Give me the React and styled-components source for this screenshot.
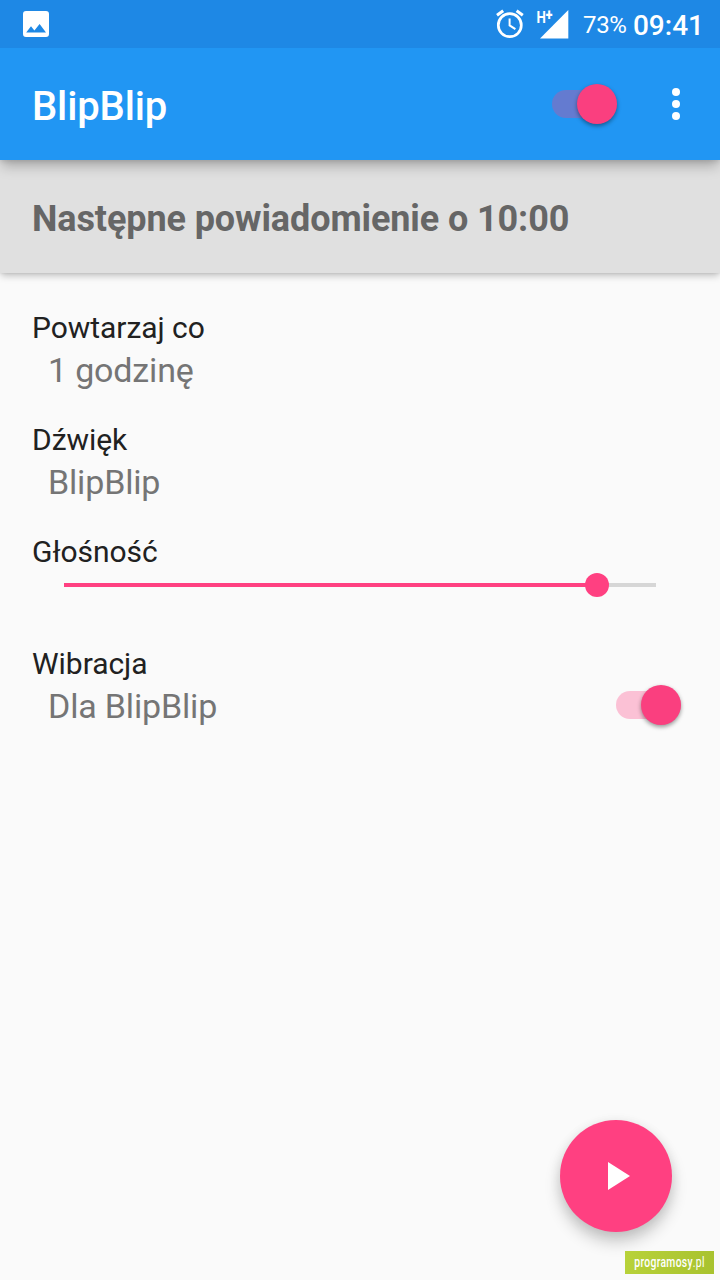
import { useState } from 'react'
import styled, { createGlobalStyle } from 'styled-components'

function ImageIcon() {
   return (
      <svg width="26" height="26" viewBox="0 0 26 26">
         <path
            fill="#fff"
            fillRule="evenodd"
            d="M3 0H23A3 3 0 0 1 26 3V23A3 3 0 0 1 23 26H3A3 3 0 0 1 0 23V3A3 3 0 0 1 3 0ZM3.2 21.6H23L16.6 13L11.4 19.6L8 15.2Z"
         />
      </svg>
   )
}

function AlarmIcon() {
   return (
      <svg width="32" height="32" viewBox="0 0 32 32" fill="none">
         <g stroke="#fff">
            <circle cx="15.8" cy="17.2" r="11.5" strokeWidth="2.7" />
            <path d="M15.6 10.4V17.4L21.4 21.2" strokeWidth="2" />
            <path
               d="M3 7.3L9.2 2.7M28.8 7.3L22.6 2.7"
               strokeWidth="3"
            />
         </g>
      </svg>
   )
}

function SignalIcon() {
   return (
      <svg width="34" height="48" viewBox="0 -8 34 48">
         <path fill="#fff" d="M5 30.4L33.3 2V30.4Z" />
         <NetworkText transform="translate(1.4 14.7) scale(0.78 1)">
            H<tspan dy="-2.4">+</tspan>
         </NetworkText>
      </svg>
   )
}

function Toggle({ checked, onChange, label }) {
   return (
      <Track
         type="button"
         role="switch"
         aria-checked={checked}
         aria-label={label}
         $on={checked}
         onClick={() => onChange(!checked)}
      >
         <Thumb $on={checked} />
      </Track>
   )
}

function App() {
   const [enabled, setEnabled] = useState(true)
   const [vibrate, setVibrate] = useState(true)
   const volume = 90

   return (
      <Screen>
         <GlobalStyle />
         <StatusBar>
            <ImageIcon />
            <StatusRight>
               <AlarmIcon />
               <SignalIcon />
               <Battery>73%</Battery>
               <Clock>09:41</Clock>
            </StatusRight>
         </StatusBar>
         <Toolbar>
            <Title>BlipBlip</Title>
            <Toggle checked={enabled} onChange={setEnabled} label="BlipBlip" />
            <MenuButton type="button">
               <Dot />
               <Dot />
               <Dot />
            </MenuButton>
         </Toolbar>
         <Banner>Następne powiadomienie o 10:00</Banner>
         <Settings>
            <Row>
               <Label>Powtarzaj co</Label>
               <Value>1 godzinę</Value>
            </Row>
            <Row>
               <Label>Dźwięk</Label>
               <Value>BlipBlip</Value>
            </Row>
            <Row>
               <Label>Głośność</Label>
               <Slider>
                  <SliderFill style={{ width: `${volume}%` }} />
                  <SliderThumb />
                  <SliderRest />
               </Slider>
            </Row>
            <Row>
               <Label>Wibracja</Label>
               <ValueLine>
                  <Value>Dla BlipBlip</Value>
                  <Toggle
                     checked={vibrate}
                     onChange={setVibrate}
                     label="Wibracja"
                  />
               </ValueLine>
            </Row>
         </Settings>
         <PlayButton type="button">
            <svg width="24" height="30" viewBox="0 0 24 30">
               <path fill="#fff" d="M1 1V29L23 15Z" />
            </svg>
         </PlayButton>
         <Watermark>
            <WatermarkText>
               programosy<span>.pl</span>
            </WatermarkText>
         </Watermark>
      </Screen>
   )
}

export default App

const GlobalStyle = createGlobalStyle`
   * {
      box-sizing: border-box;
   }
   body {
      margin: 0;
      background: #fafafa;
   }
   button {
      border: none;
      padding: 0;
      cursor: pointer;
   }
`
const Screen = styled.div`
   position: relative;
   width: 720px;
   height: 1280px;
   overflow: hidden;
   display: flex;
   flex-direction: column;
   background: #fafafa;
   font-family: Roboto, sans-serif;
`
const StatusBar = styled.header`
   display: flex;
   align-items: center;
   justify-content: space-between;
   height: 48px;
   padding: 0 16px 0 23px;
   background: #1e88e5;
   color: #fff;
   z-index: 3;
`
const StatusRight = styled.div`
   display: flex;
   align-items: center;
   height: 48px;
   & > svg:nth-child(2) {
      margin-left: 9px;
   }
`
const NetworkText = styled.text`
   fill: #fff;
   font-family: Roboto, sans-serif;
   font-weight: 700;
   font-size: 17px;
   tspan {
      font-size: 16px;
      font-weight: 900;
   }
`
const Battery = styled.span`
   margin-left: 14px;
   font-size: 24px;
   line-height: 28px;
   margin-top: 2px;
   width: 44px;
   letter-spacing: -0.3px;
`
const Clock = styled.span`
   margin-left: 6px;
   font-size: 28px;
   line-height: 32px;
   font-weight: 500;
   margin-top: 3px;
`
const Toolbar = styled.div`
   display: flex;
   align-items: center;
   height: 112px;
   padding: 0 24px 0 32px;
   background: #2196f3;
   z-index: 2;
   box-shadow: 0 8px 12px -2px rgba(0, 0, 0, 0.25),
      0 1px 5px rgba(0, 0, 0, 0.12);
`
const Title = styled.h1`
   flex: 1;
   margin: 6px 0 0;
   font-weight: 500;
   font-size: 40px;
   line-height: 46px;
   letter-spacing: -0.15px;
   color: #fff;
`
const Track = styled.button`
   display: flex;
   align-items: center;
   justify-content: ${(p) => (p.$on ? 'flex-end' : 'flex-start')};
   width: 65px;
   height: 28px;
   border-radius: 14px;
   background: ${(p) =>
      p.$on ? 'rgba(255, 64, 129, 0.3)' : 'rgba(0, 0, 0, 0.26)'};
`
const Thumb = styled.span`
   flex: none;
   width: 40px;
   height: 40px;
   border-radius: 50%;
   background: ${(p) => (p.$on ? '#fa3f7f' : '#f1f1f1')};
   box-shadow: 0 2px 4px rgba(0, 0, 0, 0.4);
`
const MenuButton = styled.button`
   display: flex;
   flex-direction: column;
   align-items: center;
   gap: 4px;
   width: 40px;
   margin-left: 39px;
   background: none;
`
const Dot = styled.span`
   width: 8px;
   height: 8px;
   border-radius: 50%;
   background: #fff;
`
const Banner = styled.div`
   height: 113px;
   padding: 38px 32px 0;
   background: #e0e0e0;
   font-weight: 700;
   font-size: 36px;
   line-height: 42px;
   letter-spacing: -0.1px;
   color: #666;
   z-index: 1;
   box-shadow: 0 4px 7px -1px rgba(0, 0, 0, 0.22),
      0 0 3px rgba(0, 0, 0, 0.12);
`
const Settings = styled.main`
   padding: 37px 32px 0;
`
const Row = styled.section`
   height: 112px;
`
const Label = styled.div`
   font-size: 30px;
   line-height: 35px;
   letter-spacing: -0.04px;
   color: #212121;
`
const Value = styled.div`
   padding: 5px 0 0 16px;
   font-size: 34px;
   line-height: 40px;
   letter-spacing: -0.17px;
   color: #757575;
`
const ValueLine = styled.div`
   display: flex;
   align-items: center;
   justify-content: space-between;
   padding-right: 7px;
   height: 45px;
   & > button {
      margin-top: 3px;
   }
`
const Slider = styled.div`
   display: flex;
   align-items: center;
   height: 24px;
   margin: 4px 32px 0;
`
const SliderFill = styled.div`
   height: 4px;
   background: #ff4081;
`
const SliderThumb = styled.div`
   flex: none;
   width: 24px;
   height: 24px;
   margin: 0 -12px;
   border-radius: 50%;
   background: #ff4081;
   z-index: 1;
`
const SliderRest = styled.div`
   flex: 1;
   height: 4px;
   background: #d6d6d6;
`
const PlayButton = styled.button`
   position: absolute;
   right: 48px;
   bottom: 48px;
   display: flex;
   align-items: center;
   justify-content: center;
   width: 112px;
   height: 112px;
   padding-left: 6px;
   border-radius: 50%;
   background: #ff4081;
   box-shadow: 0 10px 16px rgba(0, 0, 0, 0.2), 0 2px 12px rgba(0, 0, 0, 0.08);
`
const Watermark = styled.div`
   position: absolute;
   right: 6px;
   bottom: 6px;
   display: flex;
   justify-content: center;
   align-items: center;
   width: 89px;
   height: 23px;
   background: linear-gradient(100deg, #b8d23a, #a8c22e);
`
const WatermarkText = styled.span`
   font-size: 14px;
   line-height: 16px;
   font-weight: 500;
   letter-spacing: 0.4px;
   color: #fff;
   transform: translateY(-1px) scaleX(0.74);
   span {
      font-weight: 400;
   }
`
